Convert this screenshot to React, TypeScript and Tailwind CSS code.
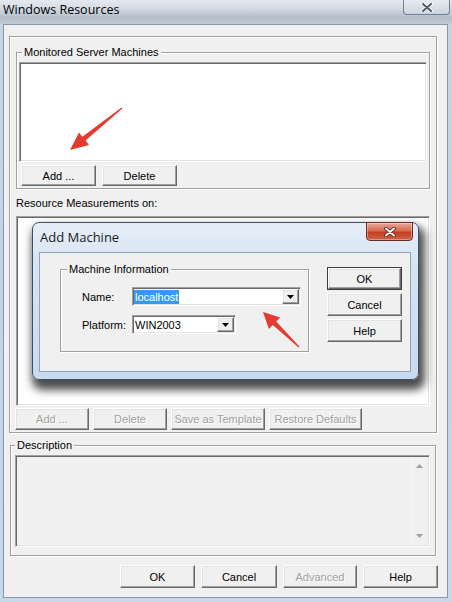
import React from "react";

const BTN =
  "flex items-center justify-center bg-[#f0f0f0] border border-t-white border-l-white border-r-[#696969] border-b-[#696969] shadow-[inset_-1px_-1px_0_#a0a0a0,inset_1px_1px_0_#e3e3e3]";
const SUNKEN =
  "border border-t-[#a0a0a0] border-l-[#a0a0a0] border-r-white border-b-white shadow-[inset_1px_1px_0_#696969,inset_-1px_-1px_0_#e3e3e3]";
const ETCH = "border border-[#a0a0a0] shadow-[inset_1px_1px_0_#fff,1px_1px_0_#fff]";
const DIS = "text-[#a0a0a0] [text-shadow:1px_1px_0_#fff]";
const TXT = "text-[11px] leading-[14px]";

function Btn({
  className = "",
  disabled = false,
  children,
}: {
  className?: string;
  disabled?: boolean;
  children: React.ReactNode;
}) {
  return (
    <div className={`${BTN} ${TXT} ${disabled ? DIS : "text-black"} ${className}`}>
      {children}
    </div>
  );
}

function DropBtn() {
  return (
    <div className={`${BTN} ml-auto w-[17px] h-[15px] shrink-0`}>
      <svg width="7" height="4" viewBox="0 0 7 4">
        <path d="M0 0H7L3.5 4Z" fill="#000" />
      </svg>
    </div>
  );
}

function SmallArrow({ up }: { up?: boolean }) {
  return (
    <svg width="7" height="4" viewBox="0 0 7 4">
      <path d={up ? "M0 4H7L3.5 0Z" : "M0 0H7L3.5 4Z"} fill="#a0a0a0" />
    </svg>
  );
}

function Dialog() {
  return (
    <div className="absolute left-[15px] top-[5px] w-[387px] h-[158px] rounded-[7px] border border-[#3e4f63] bg-[linear-gradient(180deg,#e6eef8_0%,#d5e3f2_30%,#c8daee_100%)] shadow-[3px_7px_9px_3px_rgba(0,0,0,0.7)] flex flex-col">
      {/* title row */}
      <div className="h-[29px] flex items-start justify-between shrink-0">
        <div className="pl-[7px] pt-[5px] font-['Open_Sans',sans-serif] text-[13px] leading-[18px] text-[#1a1a1a]">
          Add Machine
        </div>
        <div className="mr-[5px] -mt-px w-[47px] h-[19px] rounded-b-[4px] border border-[#6a2b22] bg-[linear-gradient(180deg,#eba89a_0%,#d86a55_45%,#c2401f_55%,#d0614a_100%)] shadow-[inset_0_0_0_1px_rgba(255,255,255,0.35)] flex items-center justify-center">
          <svg width="12" height="10" viewBox="0 0 12 10">
            <path d="M2 1.5L10 8.5M10 1.5L2 8.5" stroke="#4a1a12" strokeWidth="3.6" strokeLinecap="round" />
            <path d="M2 1.5L10 8.5M10 1.5L2 8.5" stroke="#fff" strokeWidth="2" strokeLinecap="round" />
          </svg>
        </div>
      </div>
      {/* client */}
      <div className="ml-[6px] w-[372px] h-[120px] border border-[#8ea3ba] bg-[#f0f0f0] flex items-start">
        <fieldset className={`ml-[20px] mt-[9px] w-[249px] h-[90px] ${ETCH} pl-[6px] pt-[11px]`}>
          <legend className={`px-[2px] bg-[#f0f0f0] ${TXT} text-black`}>Machine Information</legend>
          <div className="flex items-center h-[19px]">
            <div className={`ml-[15px] w-[50px] ${TXT} text-black`}>Name:</div>
            <div className={`w-[169px] h-[19px] bg-white ${SUNKEN} flex items-center pl-[1px] pr-[1px]`}>
              <span className={`bg-[#3399ff] text-white px-[1px] ${TXT}`}>localhost</span>
              <DropBtn />
            </div>
          </div>
          <div className="flex items-center h-[19px] mt-[9px]">
            <div className={`ml-[15px] w-[50px] ${TXT} text-black`}>Platform:</div>
            <div className={`w-[104px] h-[19px] bg-white ${SUNKEN} flex items-center pl-[2px] pr-[1px]`}>
              <span className={`${TXT} text-black`}>WIN2003</span>
              <DropBtn />
            </div>
          </div>
        </fieldset>
        <div className="ml-[18px] mt-[14px] flex flex-col gap-[3px]">
          <div className="w-[75px] h-[23px] border border-[#3c3c3c]">
            <Btn className="w-full h-full">OK</Btn>
          </div>
          <Btn className="w-[75px] h-[23px]">Cancel</Btn>
          <Btn className="w-[75px] h-[23px]">Help</Btn>
        </div>
      </div>
    </div>
  );
}

function Arrows() {
  return (
    <svg className="absolute left-0 top-0 pointer-events-none" width="452" height="602" viewBox="0 0 452 602">
      <polygon
        points="70,150 79,132.5 82.4,136.8 121.6,107.6 122.4,108.5 85.6,140.6 89,145"
        fill="#e53a2e"
      />
      <polygon
        points="263,312 280.1,317.5 276.2,321.4 299.4,346.6 298.6,347.4 272.8,325 268.9,328.9"
        fill="#e53a2e"
      />
    </svg>
  );
}

export default function App() {
  return (
    <div className="relative w-[452px] h-[602px] overflow-hidden bg-[linear-gradient(180deg,#c9d4df_0%,#c3d3e4_50%,#c8d8ea_100%)] font-['Liberation_Sans',Arial,sans-serif]">
      {/* title bar */}
      <div className="h-[24px] flex items-start justify-between bg-[linear-gradient(180deg,#e4e9ee_0%,#d3dbe3_35%,#b3bec9_75%,#c0cbd6_100%)]">
        <div className="pl-[3px] pt-[1px] font-['Open_Sans',sans-serif] text-[12.5px] leading-[18px] text-black">
          Windows Resources
        </div>
        <div className="mr-[2px] w-[47px] h-[15px] rounded-b-[4px] border border-t-0 border-[#6f7f90] bg-[linear-gradient(180deg,#e6ebf0_0%,#ccd5de_100%)] flex items-center justify-center">
          <svg width="12" height="9" viewBox="0 0 12 9">
            <path d="M2 1L10 8M10 1L2 8" stroke="#fff" strokeWidth="3.6" strokeLinecap="round" />
            <path d="M2 1L10 8M10 1L2 8" stroke="#505a66" strokeWidth="2" strokeLinecap="round" />
          </svg>
        </div>
      </div>

      {/* client area */}
      <div className="ml-[3px] mr-[4px] h-[574px] border border-[#8796a6] bg-[#f0f0f0] flex flex-col">
        {/* top panel */}
        <div className={`ml-[5px] mt-[11px] w-[428px] h-[397px] ${ETCH} flex flex-col`}>
          <fieldset className={`ml-[6px] mt-[8px] w-[414px] ${ETCH} pl-[2px] pt-[3px] pb-[2px]`}>
            <legend className={`ml-[3px] px-[2px] bg-[#f0f0f0] ${TXT} text-black`}>Monitored Server Machines</legend>
            <div className={`w-[408px] h-[100px] bg-white ${SUNKEN}`} />
            <div className="flex gap-[6px] mt-[3px] ml-[2px]">
              <Btn className="w-[75px] h-[21px]">Add ...</Btn>
              <Btn className="w-[75px] h-[21px]">Delete</Btn>
            </div>
          </fieldset>
          <div className={`ml-[6px] mt-[7px] ${TXT} text-black`}>Resource Measurements on:</div>
          <div className={`relative ml-[6px] mt-[6px] w-[414px] h-[190px] bg-white ${SUNKEN}`}>
            <Dialog />
          </div>
          <div className="flex gap-[4px] ml-[5px] mt-[2px]">
            <Btn disabled className="w-[74px] h-[22px]">Add ...</Btn>
            <Btn disabled className="w-[74px] h-[22px]">Delete</Btn>
            <Btn disabled className="w-[94px] h-[22px]">Save as Template</Btn>
            <Btn disabled className="w-[93px] h-[22px]">Restore Defaults</Btn>
          </div>
        </div>

        {/* description */}
        <fieldset className={`ml-[6px] mt-[5px] w-[426px] ${ETCH} pl-[4px] pt-[3px] pb-[8px]`}>
          <legend className={`ml-[0px] px-[2px] bg-[#f0f0f0] ${TXT} text-black`}>Description</legend>
          <div className={`w-[415px] h-[92px] bg-[#f0f0f0] ${SUNKEN} flex justify-end p-[2px]`}>
            <div className="w-[16px] h-full border-l border-[#f8f8f8] flex flex-col items-center justify-between py-[6px]">
              <SmallArrow up />
              <SmallArrow />
            </div>
          </div>
        </fieldset>

        {/* bottom buttons */}
        <div className="flex gap-[6px] ml-[116px] mt-[9px]">
          <Btn className="w-[75px] h-[23px]">OK</Btn>
          <Btn className="w-[76px] h-[23px]">Cancel</Btn>
          <Btn disabled className="w-[74px] h-[23px]">Advanced</Btn>
          <Btn className="w-[75px] h-[23px]">Help</Btn>
        </div>
      </div>

      <Arrows />
    </div>
  );
}
